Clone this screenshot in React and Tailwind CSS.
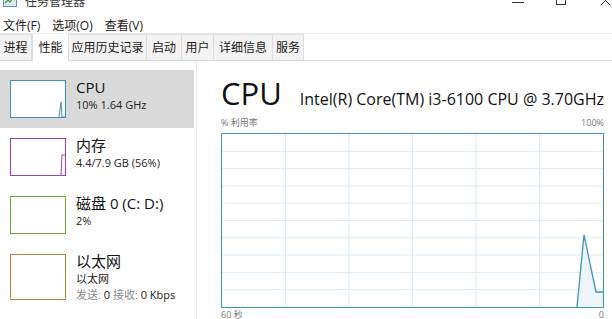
import React from "react";

const font = { fontFamily: "'Open Sans', 'Noto Sans CJK SC', sans-serif" };

const tabs = [
  { label: "进程", w: "w-[32px]" },
  { label: "性能", w: "w-[37px]", active: true },
  { label: "应用历史记录", w: "w-[78px]" },
  { label: "启动", w: "w-[35px]" },
  { label: "用户", w: "w-[32px]" },
  { label: "详细信息", w: "w-[59px]" },
  { label: "服务", w: "w-[31px]" },
];

function Thumb({ color, h, line }) {
  return (
    <div className={`w-[56px] ${h} border shrink-0 bg-white`} style={{ borderColor: color }}>
      {line && (
        <svg width="54" height="100%" viewBox="0 0 54 36" preserveAspectRatio="none" className="h-full">
          <path d={line} fill="none" stroke={color} strokeWidth="1" />
        </svg>
      )}
    </div>
  );
}

function SideItem({ color, h, line, title, sub, selected, children }) {
  return (
    <div className={`flex gap-[10px] pl-[10px] py-[10px] w-[194px] ${selected ? "bg-[#d9d9d9]" : ""}`}>
      <Thumb color={color} h={h} line={line} />
      <div className="-mt-[3px]">
        <div className="text-[15px] leading-[20px] text-[#111]">{title}</div>
        <div className="text-[11px] leading-[15px] text-[#222]">{sub}</div>
        {children}
      </div>
    </div>
  );
}

function Graph() {
  const W = 381;
  const H = 173;
  const vs = [1, 2, 3, 4, 5].map((i) => (W / 6) * i);
  const hs = [1, 2, 3, 4, 5, 6, 7, 8, 9].map((i) => (H / 10) * i);
  return (
    <div className="w-[383px] h-[175px] border border-[#3d94b8] bg-white">
      <svg width={W} height={H} viewBox={`0 0 ${W} ${H}`}>
        {vs.map((x) => (
          <line key={"v" + x} x1={x} y1="0" x2={x} y2={H} stroke="#d9eaf4" strokeWidth="1" />
        ))}
        {hs.map((y) => (
          <line key={"h" + y} x1="0" y1={y} x2={W} y2={y} stroke="#d9eaf4" strokeWidth="1" />
        ))}
        <polygon points="355,173 362,101 374,158 381,158 381,173" fill="#eef4fa" />
        <polyline points="355,173 362,101 374,158 381,158" fill="none" stroke="#3d94b8" strokeWidth="1.3" />
      </svg>
    </div>
  );
}

export default function App() {
  return (
    <div className="w-[612px] h-[319px] overflow-hidden bg-white text-[#1a1a1a] relative" style={font}>
      {/* title bar */}
      <div className="h-[16px] flex items-start relative">
        <div className="flex items-center gap-[8px] pl-[3px] -mt-[6px]">
          <svg width="14" height="14" viewBox="0 0 14 14">
            <rect x="0.5" y="1.5" width="13" height="10" fill="#dbe9f3" stroke="#5c8fb0" />
            <polyline points="2,8 5,5 7,7 10,3 12,5" fill="none" stroke="#3a9a3a" strokeWidth="1.2" />
          </svg>
          <span className="text-[12px] leading-[16px] text-[#333]">任务管理器</span>
        </div>
        <div className="ml-auto flex items-start h-[16px]">
          <div className="w-[12px] h-px bg-[#333] mt-[2px] mr-[32px]" />
          <div className="w-[10px] h-[10px] border border-[#333] -mt-[5px] mr-[34px]" />
          <svg width="11" height="11" viewBox="0 0 11 11" className="-mt-[5px] mr-[1px]">
            <path d="M0.5 0.5 L10.5 10.5 M10.5 0.5 L0.5 10.5" stroke="#333" strokeWidth="1" />
          </svg>
        </div>
      </div>

      {/* menu bar */}
      <div className="flex gap-[12px] pl-[3px] h-[18px] pt-[3px] items-center text-[12px] leading-[16px] text-[#1a1a1a] border-b border-[#ececec]">
        <span>文件(F)</span>
        <span>选项(O)</span>
        <span>查看(V)</span>
      </div>

      {/* tabs */}
      <div className="flex h-[27px] border-b border-[#d9d9d9] items-end">
        {tabs.map((t) => (
          <div
            key={t.label}
            className={`${t.w} h-[26px] flex items-center justify-center text-[12px] border-r border-[#dcdcdc] ${
              t.active ? "bg-white border-l -mb-px h-[27px]" : "bg-[#f3f3f3] border-t"
            }`}
          >
            {t.label}
          </div>
        ))}
      </div>

      {/* content */}
      <div className="flex">
        <div className="w-[197px] shrink-0 pt-[9px] border-r border-[#e8e8e8] h-[258px]">
          <SideItem color="#3e8fbf" h="h-[38px]" selected title="CPU" sub="10% 1.64 GHz" line="M48 36 L50 21 L51 36 L54 36" />
          <SideItem color="#9b3fbf" h="h-[38px]" title="内存" sub="4.4/7.9 GB (56%)" line="M50 36 L51 16 L54 16" />
          <SideItem color="#6aaa3a" h="h-[38px]" title="磁盘 0 (C: D:)" sub="2%" />
          <SideItem color="#c08040" h="h-[46px]" title="以太网" sub="以太网">
            <div className="text-[11px] leading-[15px] mt-[1px]">
              <span className="text-[#8a8a8a]">发送: </span>
              <span>0 </span>
              <span className="text-[#8a8a8a]">接收: </span>
              <span>0 Kbps</span>
            </div>
          </SideItem>
          <SideItem color="#2f7fb0" h="h-[38px]" title="GPU 0" sub="" />
        </div>

        <div className="pl-[24px] pt-[13px] flex-1">
          <div className="flex items-baseline justify-between w-[383px]">
            <span className="text-[31px] leading-[38px] text-[#111]">CPU</span>
            <span className="text-[16px] text-[#111]">Intel(R) Core(TM) i3-6100 CPU @ 3.70GHz</span>
          </div>
          <div className="flex justify-between w-[383px] text-[9px] leading-[12px] text-[#777] mt-[5px] mb-[4px]">
            <span>% 利用率</span>
            <span>100%</span>
          </div>
          <Graph />
          <div className="flex justify-between w-[383px] text-[9px] leading-[12px] text-[#777] mt-[1px]">
            <span>60 秒</span>
            <span>0</span>
          </div>
        </div>
      </div>
    </div>
  );
}
